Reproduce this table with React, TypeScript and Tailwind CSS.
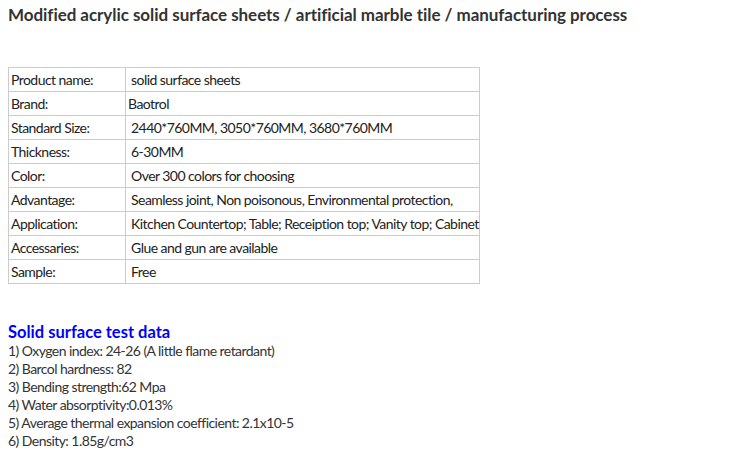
import React from "react";

const rows: [string, string][] = [
  ["Product name:", "\u00a0solid surface sheets"],
  ["Brand:", "Baotrol"],
  ["Standard Size:", "\u00a02440*760MM, 3050*760MM, 3680*760MM"],
  ["Thickness:", "\u00a06-30MM"],
  ["Color:", "\u00a0Over 300 colors for choosing"],
  ["Advantage:", "\u00a0Seamless joint, Non poisonous, Environmental protection,"],
  ["Application:", "\u00a0Kitchen Countertop; Table; Receiption top; Vanity top; Cabinet"],
  ["Accessaries:", "\u00a0Glue and gun are available"],
  ["Sample:", "\u00a0Free"],
];

const tests = [
  "1) Oxygen index: 24-26 (A little flame retardant)",
  "2) Barcol hardness: 82",
  "3) Bending strength:62 Mpa",
  "4) Water absorptivity:0.013%",
  "5) Average thermal expansion coefficient: 2.1x10-5",
  "6) Density: 1.85g/cm3",
];

export default function App() {
  return (
    <div className="w-[751px] h-[460px] bg-white text-[#333] overflow-hidden" style={{ fontFamily: "Lato, 'Open Sans', sans-serif" }}>
      <h1 className="pl-2 pt-[5px] text-[17px] leading-[20px] font-bold text-[#333] tracking-[-0.05px]">
        Modified acrylic solid surface sheets / artificial marble tile / manufacturing process
      </h1>
      <table className="ml-2 mt-[42px] w-[472px] table-fixed border-collapse text-[14px] tracking-[-0.55px] text-[#222]">
        <colgroup>
          <col className="w-[117px]" />
          <col />
        </colgroup>
        <tbody>
          {rows.map(([k, v]) => (
            <tr key={k} className="h-[24px]">
              <td className="border border-[#ccc] pl-[2px] py-0 leading-[23px] align-middle">{k}</td>
              <td className="border border-[#ccc] pl-[2px] pr-0 py-0 leading-[23px] align-middle whitespace-nowrap">{v}</td>
            </tr>
          ))}
        </tbody>
      </table>
      <div className="pl-2 mt-[38px]">
        <h2 className="text-[16.5px] leading-[20px] font-bold text-[#0000ff]">Solid surface test data</h2>
        <div className="text-[14px] tracking-[-0.55px] leading-[18px] text-[#333]">
          {tests.map((t) => (
            <div key={t}>{t}</div>
          ))}
        </div>
      </div>
    </div>
  );
}
